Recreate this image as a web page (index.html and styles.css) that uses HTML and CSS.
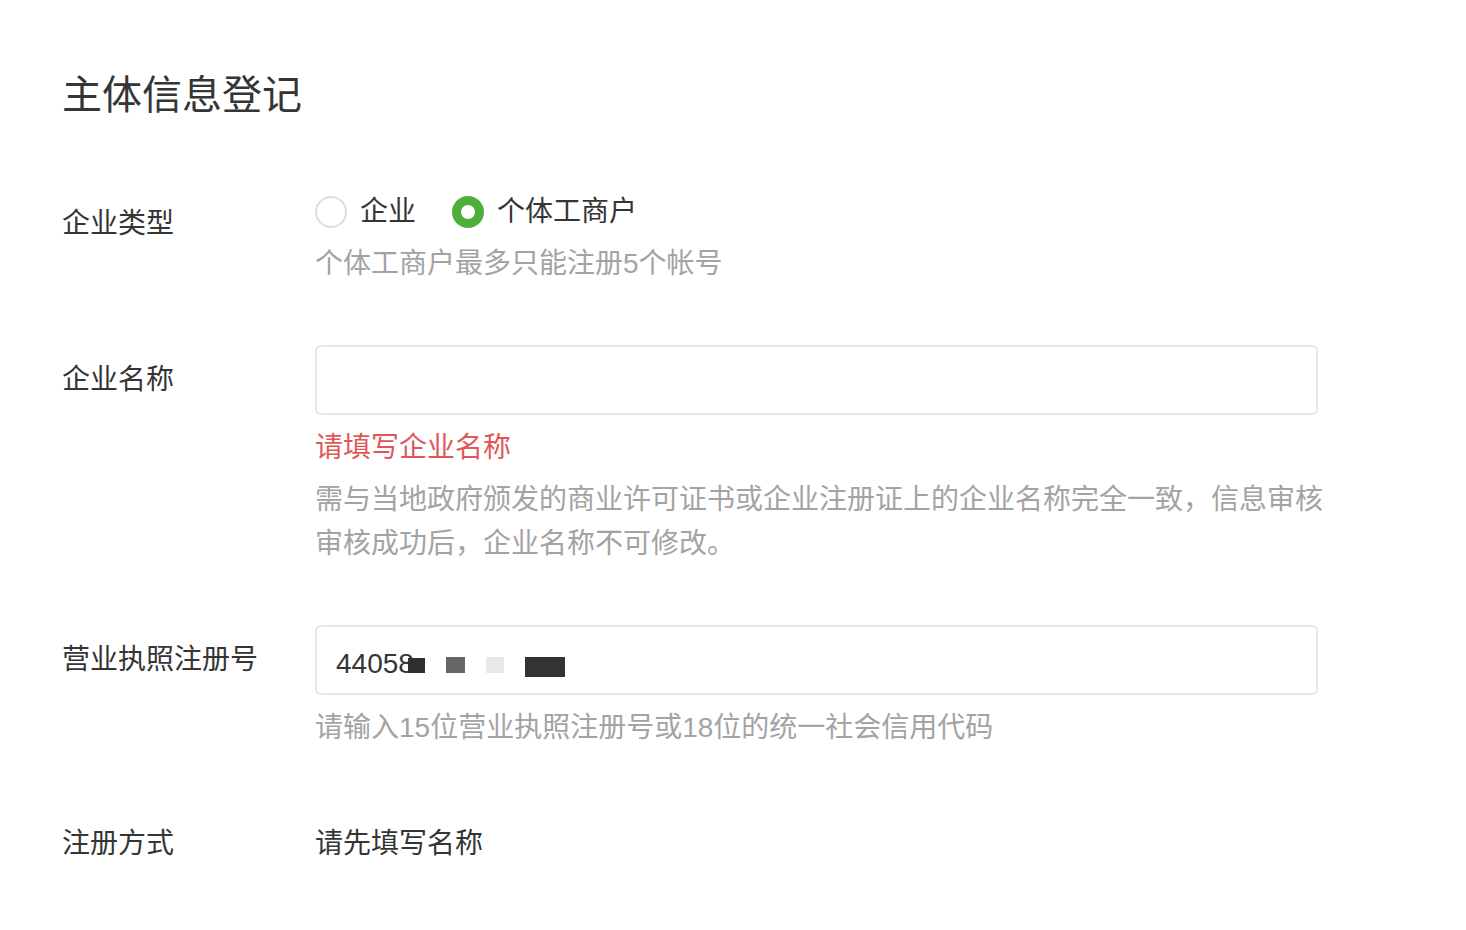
FILE: index.html
```html
<!DOCTYPE html>
<html lang="zh-CN">
<head>
<meta charset="utf-8">
<title>主体信息登记</title>
<link rel="stylesheet" href="styles.css">
</head>
<body>
<div class="page">
  <h1 class="title">主体信息登记</h1>

  <div class="row row-type">
    <div class="label">企业类型</div>
    <div class="content">
      <div class="radios">
        <span class="radio"><span class="dot"></span>企业</span>
        <span class="radio checked"><span class="dot"></span>个体工商户</span>
      </div>
      <div class="hint hint-radio">个体工商户最多只能注册5个帐号</div>
    </div>
  </div>

  <div class="row row-name">
    <div class="label">企业名称</div>
    <div class="content">
      <div class="input"></div>
      <div class="error">请填写企业名称</div>
      <div class="hint desc">需与当地政府颁发的商业许可证书或企业注册证上的企业名称完全一致，信息审核审核成功后，企业名称不可修改。</div>
    </div>
  </div>

  <div class="row row-license">
    <div class="label">营业执照注册号</div>
    <div class="content">
      <div class="input filled">44058<span class="mask m1"></span><span class="mask m2"></span><span class="mask m3"></span><span class="mask m4"></span></div>
      <div class="hint after-input">请输入15位营业执照注册号或18位的统一社会信用代码</div>
    </div>
  </div>

  <div class="row">
    <div class="label">注册方式</div>
    <div class="content">
      <div class="value">请先填写名称</div>
    </div>
  </div>
</div>
</body>
</html>
```

FILE: styles.css
```css
html, body {
  margin: 0;
  padding: 0;
  background: #ffffff;
}
body {
  font-family: "Liberation Sans", "Noto Sans CJK SC", sans-serif;
  color: #353535;
  font-size: 28px;
}
.page {
  padding: 67px 62px 0 62px;
}
.title {
  margin: 0 0 66px 0;
  font-size: 40px;
  line-height: 56px;
  font-weight: normal;
  color: #353535;
}
.row {
  display: flex;
  align-items: flex-start;
  margin-bottom: 59px;
}
.label {
  width: 253px;
  flex: none;
  padding-top: 13px;
  line-height: 44px;
  color: #353535;
}
.content {
  width: 1012px;
  display: flex;
  flex-direction: column;
}
.radios {
  display: flex;
  align-items: center;
  height: 44px;
  margin-top: 1px;
}
.radio {
  display: inline-flex;
  align-items: center;
  line-height: 44px;
  margin-right: 36px;
  color: #353535;
}
.dot {
  width: 32px;
  height: 32px;
  box-sizing: border-box;
  border-radius: 50%;
  border: 2px solid #dcdcdc;
  margin-right: 13px;
  background: #fff;
}
.radio.checked .dot {
  border: 9px solid #4fae3b;
}
.hint {
  color: #a3a3a3;
  line-height: 44px;
}
.hint-radio {
  margin-top: 8px;
}
.input {
  width: 1003px;
  height: 70px;
  box-sizing: border-box;
  border: 2px solid #e6e6e6;
  border-radius: 6px;
  background: #fff;
}
.input.filled {
  display: flex;
  align-items: center;
  padding: 8px 0 0 19px;
  color: #353535;
  font-size: 28px;
}
.mask {
  display: inline-block;
  flex: none;
}
.m1 {
  width: 17px;
  height: 15px;
  background: #2f2f2f;
  margin-left: -6px;
  margin-top: 2px;
}
.m2 {
  width: 19px;
  height: 16px;
  background: #666666;
  margin-left: 21px;
  margin-top: 2px;
}
.m3 {
  width: 18px;
  height: 16px;
  background: #e9e9e9;
  margin-left: 21px;
  margin-top: 2px;
}
.m4 {
  width: 40px;
  height: 20px;
  background: #333333;
  margin-left: 21px;
  margin-top: 5px;
}
.error {
  color: #e0575a;
  line-height: 44px;
  margin-top: 11px;
}
.desc {
  margin-top: 8px;
  width: 1010px;
}
.after-input {
  margin-top: 11px;
}
.value {
  padding-top: 13px;
  line-height: 44px;
  color: #353535;
}
```
